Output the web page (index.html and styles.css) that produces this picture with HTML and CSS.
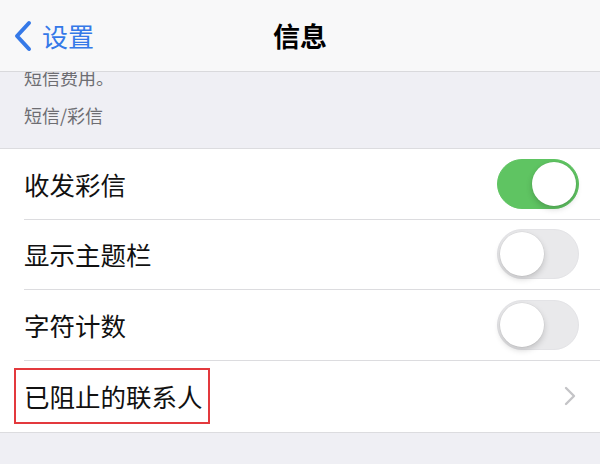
FILE: index.html
```html
<!DOCTYPE html>
<html lang="zh-CN">
<head>
<meta charset="utf-8">
<link rel="stylesheet" href="styles.css">
</head>
<body>
<div class="screen">
  <header class="nav">
    <div class="nav-left">
      <svg class="back-icon" width="22" height="32" viewBox="0 0 22 32"><polyline points="17,3 5,16 17,29" fill="none" stroke="#3579e8" stroke-width="4" stroke-linecap="round" stroke-linejoin="round"/></svg>
      <span class="back-text">设置</span>
    </div>
    <div class="nav-title">信息</div>
    <div class="nav-right"></div>
  </header>
  <main class="content">
    <p class="note">短信费用。</p>
    <div class="section-header">短信/彩信</div>
    <div class="list">
      <div class="row">
        <span class="label">收发彩信</span>
        <span class="switch on"><span class="knob"></span></span>
      </div>
      <div class="row">
        <span class="label">显示主题栏</span>
        <span class="switch"><span class="knob"></span></span>
      </div>
      <div class="row">
        <span class="label">字符计数</span>
        <span class="switch"><span class="knob"></span></span>
      </div>
      <div class="row last">
        <span class="label boxed">已阻止的联系人</span>
        <svg class="chevron" width="14" height="20" viewBox="0 0 14 20"><polyline points="3,2 11,10 3,18" fill="none" stroke="#c4c4c7" stroke-width="2.4" stroke-linecap="round" stroke-linejoin="round"/></svg>
      </div>
    </div>
  </main>
</div>
</body>
</html>
```

FILE: styles.css
```css
html, body {
  margin: 0;
  padding: 0;
}
body {
  width: 600px;
  height: 464px;
  overflow: hidden;
  background: #efeff4;
  font-family: "Noto Sans CJK SC", "Noto Sans", sans-serif;
}
.screen {
  display: flex;
  flex-direction: column;
  height: 464px;
}
.nav {
  height: 72px;
  box-sizing: border-box;
  background: #f8f8f9;
  border-bottom: 1px solid #d9d9dc;
  display: grid;
  grid-template-columns: 1fr auto 1fr;
  align-items: center;
  flex: none;
}
.nav-left {
  display: flex;
  align-items: center;
  padding-left: 12px;
  gap: 8px;
}
.back-icon {
  display: block;
}
.back-text {
  color: #3579e8;
  font-size: 26px;
  line-height: 30px;
}
.nav-title {
  font-size: 27px;
  font-weight: 700;
  color: #000;
  line-height: 30px;
}
.content {
  flex: 1;
  overflow: hidden;
}
.note {
  margin: -8px 0 0 24px;
  font-size: 18px;
  line-height: 26px;
  color: #6d6d72;
}
.section-header {
  margin-top: 12px;
  padding-left: 24px;
  font-size: 18px;
  line-height: 26px;
  color: #6d6d72;
  height: 26px;
}
.list {
  margin-top: 20px;
  background: #fff;
  border-top: 1px solid #dcdcdf;
  border-bottom: 1px solid #dcdcdf;
}
.row {
  height: 70.67px;
  box-sizing: border-box;
  margin-left: 24px;
  padding-right: 21px;
  border-bottom: 1px solid #dcdcdf;
  display: flex;
  align-items: center;
  justify-content: space-between;
}
.row.last {
  border-bottom: none;
  padding-right: 23px;
}
.label {
  font-size: 25.5px;
  color: #111;
  line-height: 32px;
}
.boxed {
  display: inline-flex;
  align-items: center;
  height: 56px;
  box-sizing: border-box;
  margin-left: -10px;
  padding: 0 5px 0 8px;
  border: 2px solid #e3393d;
}
.switch {
  width: 82px;
  height: 50px;
  box-sizing: border-box;
  border-radius: 25px;
  background: #e9e9eb;
  border: 1.5px solid #e3e3e6;
  display: flex;
  align-items: center;
  padding: 0 2px;
}
.switch.on {
  background: #5fc462;
  border-color: #5fc462;
  justify-content: flex-end;
}
.knob {
  width: 44px;
  height: 44px;
  border-radius: 50%;
  background: #fff;
  box-shadow: 0 3px 6px rgba(0,0,0,0.18), 0 0 0 0.5px rgba(0,0,0,0.06);
}
.chevron {
  display: block;
}
```
